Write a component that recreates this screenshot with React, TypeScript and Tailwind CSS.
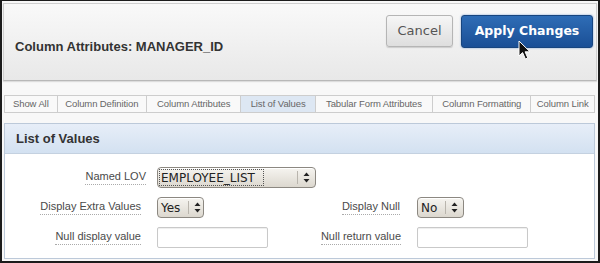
function SpinArrows() {
    return (
        <span className="flex items-center self-stretch border-l border-[#b9b5ad] pl-[5px] pr-[5px]">
            <svg width="7" height="11" viewBox="0 0 7 11">
                <path d="M3.5 0.5 L6.5 4 L0.5 4 Z" fill="#222" />
                <path d="M3.5 10.5 L6.5 7 L0.5 7 Z" fill="#222" />
            </svg>
        </span>
    );
}

function SelectBox({
    value,
    width,
    focused,
}: {
    value: string;
    width: string;
    focused?: boolean;
}) {
    return (
        <div
            className={`flex h-[21px] items-stretch justify-between rounded-[4px] border border-[#8c8881] bg-gradient-to-b from-[#f6f4f0] to-[#dcd8cf] font-['DejaVu_Sans',sans-serif] text-[12px] text-[#222] shadow-[inset_0_1px_0_#fff] ${width}`}
        >
            <span
                className={`my-[2px] ml-[2px] flex items-center pl-[1px] pr-2 ${focused ? "outline-1 outline-dotted outline-[#555]" : ""}`}
            >
                {value}
            </span>
            <span className="flex items-center py-[3px]">
                <SpinArrows />
            </span>
        </div>
    );
}

function FieldLabel({ text }: { text: string }) {
    return (
        <span className="border-b border-dotted border-[#aaa] pb-[1px] font-['Liberation_Sans',Arial,sans-serif] text-[11px] leading-[13px] text-[#4a4a4a]">
            {text}
        </span>
    );
}

function TextBox() {
    return (
        <div className="h-[21px] w-[111px] rounded-[2px] border border-[#c9c9c9] bg-white shadow-[inset_0_1px_1px_#eee]" />
    );
}

const tabs = [
    { label: "Show All", w: "w-[52px]" },
    { label: "Column Definition", w: "w-[90px]" },
    { label: "Column Attributes", w: "w-[95px]" },
    { label: "List of Values", w: "w-[75px]", active: true },
    { label: "Tabular Form Attributes", w: "w-[118px]" },
    { label: "Column Formatting", w: "w-[99px]" },
    { label: "Column Link", w: "w-[64px]" },
];

export default function App() {
    return (
        <div className="relative h-[263px] w-[600px] overflow-hidden bg-[#1c1c1c] pb-[2px] pl-[2px] pr-[2px] pt-px">
            <div className="flex h-full flex-col bg-[#f8f8f8] px-px pt-[2px]">
                {/* page header */}
                <div className="flex h-[78px] justify-between border border-[#cfcfcf] border-b-[#b8b8b8] bg-gradient-to-b from-[#f9f9f9] to-[#e8e8e8] pl-[11px] pr-[3px] shadow-[0_1px_1px_#ddd]">
                    <h1 className="mt-[36px] font-['Liberation_Sans',Arial,sans-serif] text-[13px] font-bold leading-[14px] text-[#333]">
                        Column Attributes: MANAGER_ID
                    </h1>
                    <div className="mt-[11px] flex h-[33px] gap-[8px]">
                        <button className="h-[32px] w-[67px] rounded-[3px] border border-[#b5b5b5] bg-gradient-to-b from-[#f6f6f6] to-[#dedede] font-['DejaVu_Sans',sans-serif] text-[13px] text-[#555] shadow-[0_1px_1px_#ccc]">
                            Cancel
                        </button>
                        <button className="h-[33px] w-[132px] rounded-[3px] border border-[#17457f] bg-gradient-to-b from-[#2f6db6] to-[#1a4f96] font-['DejaVu_Sans',sans-serif] text-[12.5px] font-bold text-white shadow-[0_0_2px_#6f9ad0]">
                            Apply Changes
                        </button>
                    </div>
                </div>

                {/* tabs */}
                <div className="ml-[1px] mr-[2px] mt-[14px] flex h-[18px] border border-[#cdcdcd] bg-[#f9f9f9]">
                    {tabs.map((t, i) => (
                        <div
                            key={t.label}
                            className={`flex items-center justify-center font-['Liberation_Sans',Arial,sans-serif] text-[9.5px] tracking-[-0.1px] text-[#666] ${t.w} ${i > 0 ? "border-l border-[#cdcdcd]" : ""} ${t.active ? "bg-[#dde7f3] text-[#444]" : ""}`}
                        >
                            {t.label}
                        </div>
                    ))}
                </div>

                {/* region */}
                <div className="ml-[1px] mr-[2px] mt-[10px] flex h-[136px] flex-col border border-[#bcc9d9] bg-white">
                    <div className="flex h-[30px] items-center border-b border-[#c4d1e0] bg-gradient-to-b from-[#e7eef8] to-[#d3e1f1] pl-[11px]">
                        <h2 className="font-['Liberation_Sans',Arial,sans-serif] text-[13px] font-bold text-[#333]">
                            List of Values
                        </h2>
                    </div>

                    <div className="flex flex-col pt-[13px]">
                        <div className="flex h-[21px] items-center">
                            <div className="flex w-[141px] justify-end">
                                <FieldLabel text="Named LOV" />
                            </div>
                            <div className="ml-[11px]">
                                <SelectBox value="EMPLOYEE_LIST" width="w-[159px]" focused />
                            </div>
                        </div>

                        <div className="mt-[9px] flex h-[21px] items-center">
                            <div className="flex w-[136px] justify-end">
                                <FieldLabel text="Display Extra Values" />
                            </div>
                            <div className="ml-[16px] w-[148px]">
                                <SelectBox value="Yes" width="w-[47px]" />
                            </div>
                            <div className="flex w-[95px] justify-end">
                                <FieldLabel text="Display Null" />
                            </div>
                            <div className="ml-[17px]">
                                <SelectBox value="No" width="w-[47px]" />
                            </div>
                        </div>

                        <div className="mt-[9px] flex h-[21px] items-center">
                            <div className="flex w-[136px] justify-end">
                                <FieldLabel text="Null display value" />
                            </div>
                            <div className="ml-[16px] w-[148px]">
                                <TextBox />
                            </div>
                            <div className="flex w-[96px] justify-end">
                                <FieldLabel text="Null return value" />
                            </div>
                            <div className="ml-[16px]">
                                <TextBox />
                            </div>
                        </div>
                    </div>
                </div>
            </div>

            {/* mouse pointer over Apply Changes */}
            <svg
                className="absolute left-[518px] top-[40px]"
                width="16"
                height="22"
                viewBox="0 0 16 22"
            >
                <path
                    d="M1 1 L1 16 L4.6 12.6 L7.4 19 L9.8 18 L7.1 11.8 L12 11.8 Z"
                    fill="#111"
                    stroke="#fff"
                    strokeWidth="1"
                    strokeLinejoin="round"
                />
            </svg>
        </div>
    );
}
